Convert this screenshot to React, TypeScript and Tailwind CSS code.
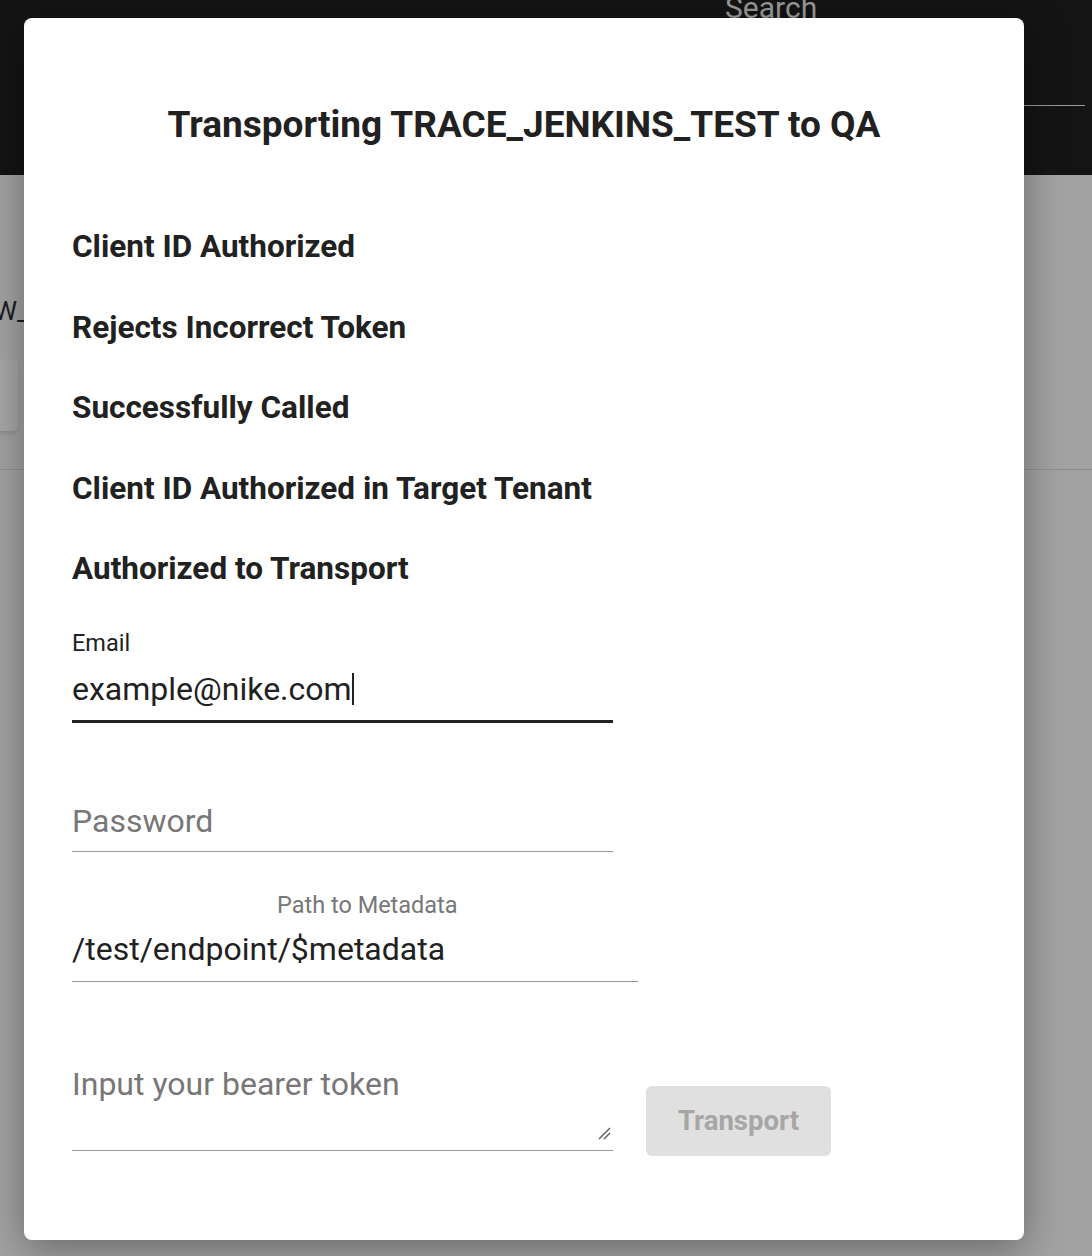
import React from 'react';

const ROWS = [
  'Client ID Authorized',
  'Rejects Incorrect Token',
  'Successfully Called',
  'Client ID Authorized in Target Tenant',
  'Authorized to Transport',
];

function Backdrop() {
  return (
    <div className="w-[1092px] h-[1256px] bg-[#a2a2a2] overflow-hidden">
      {/* header bar behind the overlay */}
      <div className="h-[175px] bg-[#141414] flex justify-end pr-[7px]">
        <div className="w-[360px] h-[106px] flex flex-col border-b border-[#9a9a9a]">
          <span className="-mt-[10px] text-[30px] leading-[36px] text-[#9a9a9a]">Search</span>
        </div>
      </div>
      <div className="h-[295px] border-b border-[#8e8e8e] flex flex-col">
        <span className="mt-[121px] -ml-[6px] text-[26px] leading-[30px] text-[#1c1c1c]">W_</span>
        <div className="mt-[33px] -ml-[40px] w-[58px] h-[72px] rounded-md bg-[#a6a6a6] shadow-md" />
      </div>
    </div>
  );
}

function Modal() {
  return (
    <div className="absolute left-[24px] top-[18px] w-[1000px] h-[1222px] bg-white rounded-lg shadow-[0_10px_40px_rgba(0,0,0,0.35)] pl-[48px] pt-[87px] text-[#212121]">
      <h1 className="-ml-[48px] text-center text-[37px] leading-[40px] font-bold">
        Transporting TRACE_JENKINS_TEST to QA
      </h1>

      <div className="mt-[62px] flex flex-col">
        {ROWS.map((r) => (
          <div key={r} className="h-[80.5px] leading-[80px] text-[31.5px] font-bold">
            {r}
          </div>
        ))}
      </div>

      {/* email */}
      <div className="mt-[21px] w-[541px] flex flex-col">
        <label className="text-[23.5px] leading-[24px] text-[#212121]">Email</label>
        <div className="h-[68px] border-b-[3px] border-[#212121] flex items-center pt-[4px]">
          <span className="text-[32px] leading-[36px]">example@nike.com</span>
          <span className="w-[2px] h-[32px] bg-[#212121]" />
        </div>
      </div>

      {/* password */}
      <div className="mt-[66px] w-[541px] h-[63px] border-b border-[#9a9a9a] flex items-center pt-[2px]">
        <span className="text-[32px] leading-[36px] text-[#777777]">Password</span>
      </div>

      {/* path to metadata */}
      <div className="mt-[41px] w-[566px] flex flex-col">
        <label className="pl-[205px] text-[23.5px] leading-[24px] text-[#777777]">Path to Metadata</label>
        <div className="h-[65px] border-b border-[#9a9a9a] flex items-center">
          <span className="text-[32px] leading-[36px]">/test/endpoint/$metadata</span>
        </div>
      </div>

      {/* bearer token */}
      <div className="mt-[84px] flex items-start gap-[33px]">
        <div className="w-[541px] h-[85px] border-b border-[#9a9a9a] relative">
          <span className="block text-[32px] leading-[36px] text-[#777777]">Input your bearer token</span>
          <svg className="absolute right-[2px] bottom-[10px]" width="14" height="14" viewBox="0 0 14 14">
            <path d="M2 13 L13 2" stroke="#555" strokeWidth="1.3" />
            <path d="M7 13 L13 7" stroke="#555" strokeWidth="1.3" />
          </svg>
        </div>
        <button className="mt-[20px] w-[185px] h-[70px] rounded-md bg-[#e0e0e0] text-[27.5px] font-bold text-[#a6a6a6]">
          Transport
        </button>
      </div>
    </div>
  );
}

export default function App() {
  return (
    <div className="relative w-[1092px] h-[1256px] overflow-hidden" style={{ fontFamily: 'Roboto, "Liberation Sans", sans-serif' }}>
      <Backdrop />
      <Modal />
    </div>
  );
}
